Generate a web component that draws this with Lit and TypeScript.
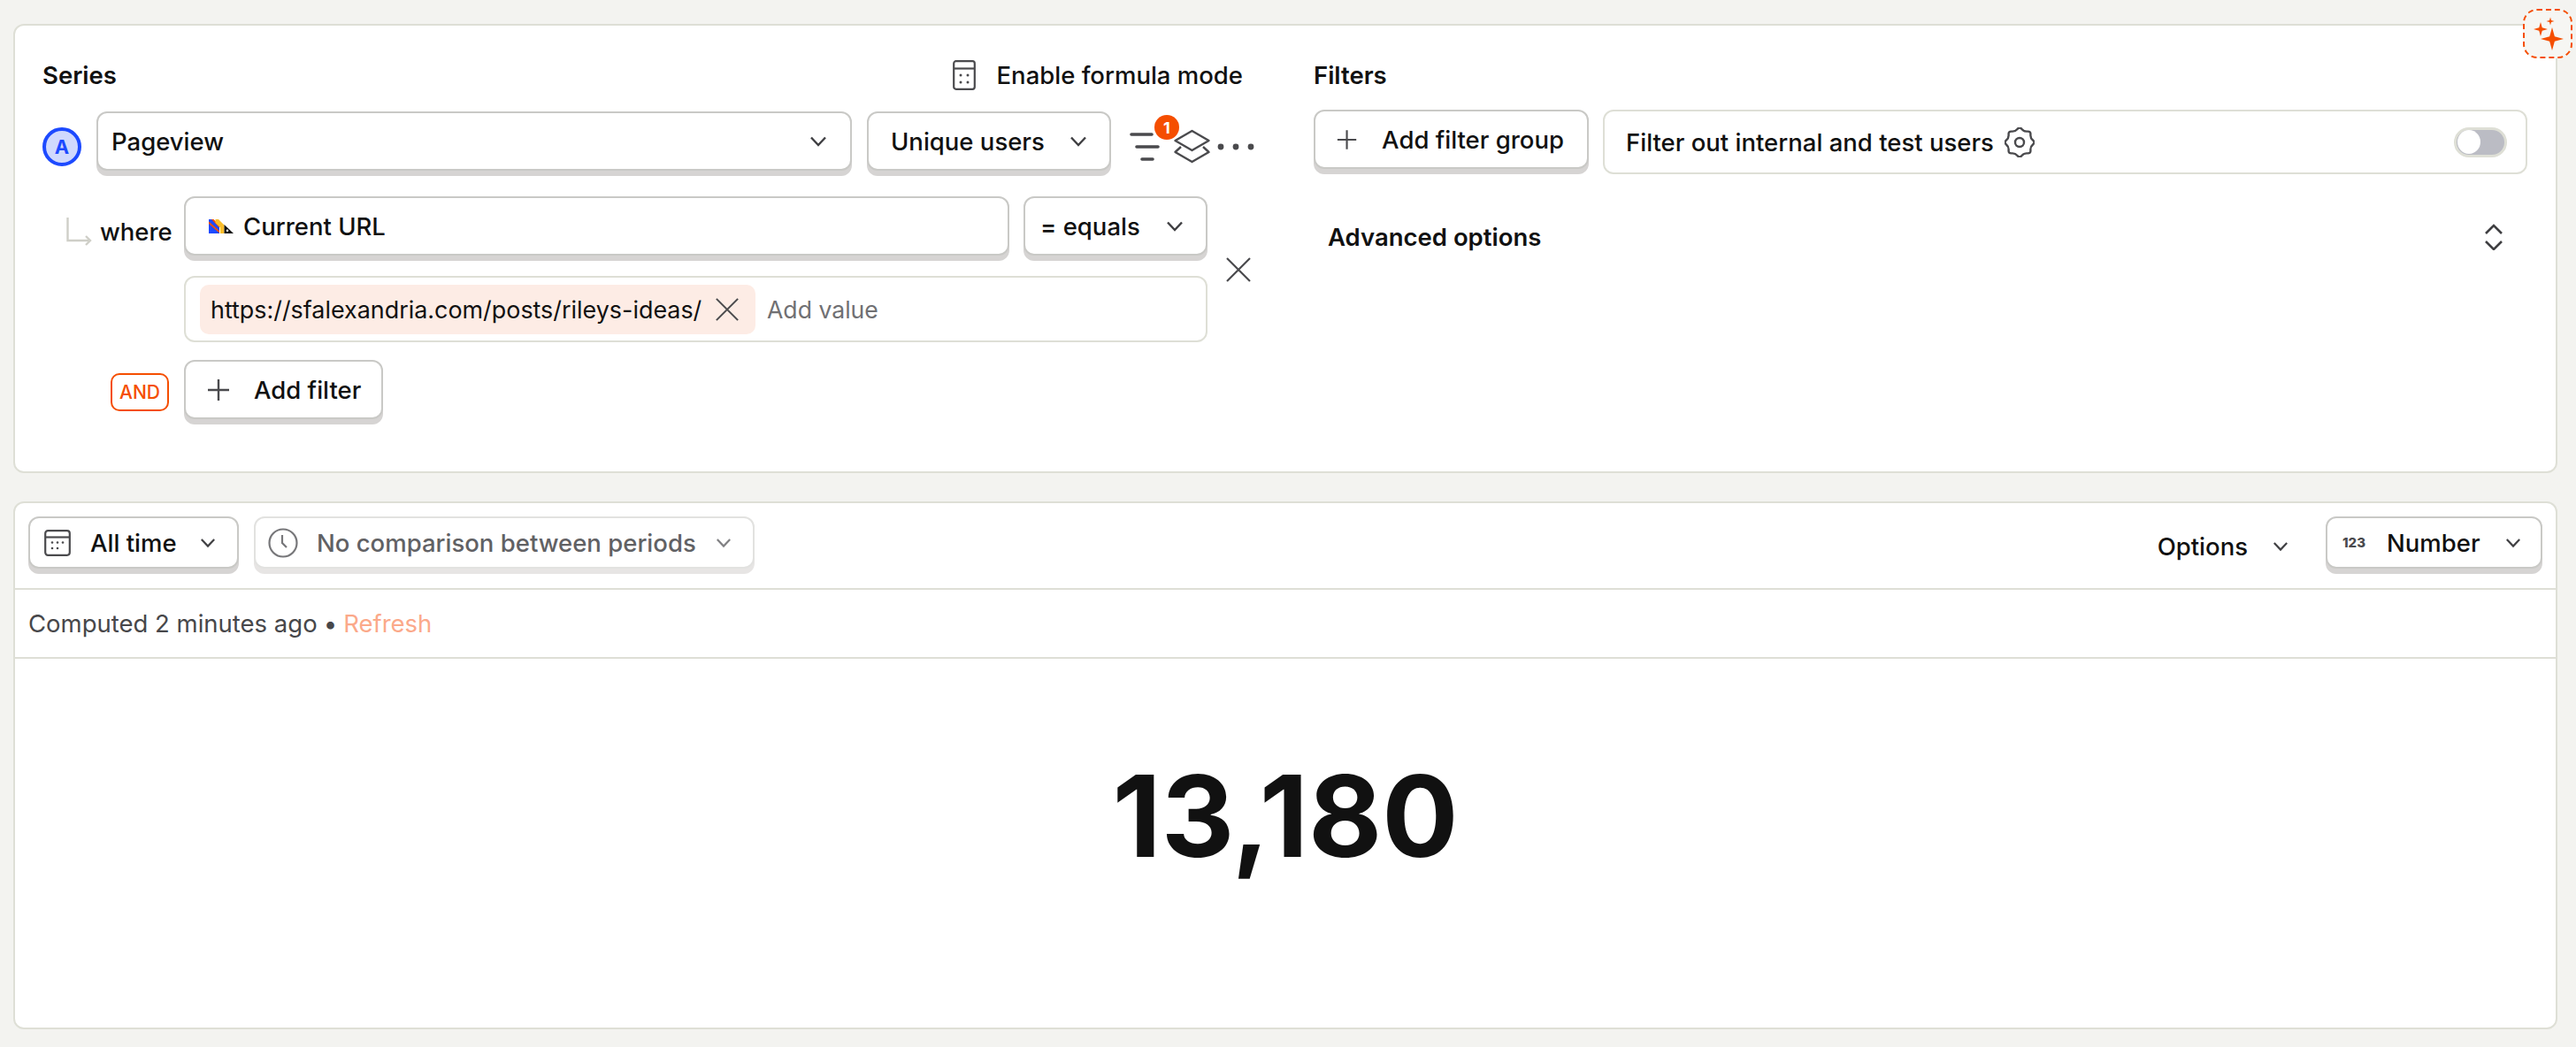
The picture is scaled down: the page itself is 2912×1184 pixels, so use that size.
import { LitElement, html, css, svg } from 'lit';
import { customElement } from 'lit/decorators.js';

const chevron = (w = 20) => html`<svg class="chev" width=${w} height=${w} viewBox="0 0 20 20" fill="none" stroke="#3f3f42" stroke-width="2.4"><path d="M2 5.5l8 8.5 8-8.5" /></svg>`;
const plus = html`<svg width="26" height="26" viewBox="0 0 26 26" stroke="#4a4a4d" stroke-width="2.4"><path d="M13 1v24M1 13h24" /></svg>`;
const cross = (s: number) => html`<svg class="cross" width=${s} height=${s} viewBox="0 0 30 30" fill="none" stroke="#4a4a4d" stroke-width="2.2"><path d="M2 2l26 26M28 2L2 28" /></svg>`;
const star = (cx: number, cy: number, r: number) => {
    const k = r * 0.22;
    return svg`<path d="M${cx} ${cy - r}L${cx + k} ${cy - k}L${cx + r} ${cy}L${cx + k} ${cy + k}L${cx} ${cy + r}L${cx - k} ${cy + k}L${cx - r} ${cy}L${cx - k} ${cy - k}Z" />`;
};

// scalloped outline for the gear, 8 lobes
const gearPath = () => {
    const pts: number[][] = [];
    for (let i = 0; i < 16; i++) {
        const r = i % 2 ? 13 : 18;
        const a = (i * Math.PI) / 8 - Math.PI / 2;
        pts.push([17 + r * Math.cos(a), 17 + r * Math.sin(a)]);
    }
    const mid = (a: number[], b: number[]) => [(a[0] + b[0]) / 2, (a[1] + b[1]) / 2];
    const start = mid(pts[15], pts[0]);
    let d = `M${start[0].toFixed(1)} ${start[1].toFixed(1)}`;
    pts.forEach((p, i) => {
        const m = mid(p, pts[(i + 1) % 16]);
        d += `Q${p[0].toFixed(1)} ${p[1].toFixed(1)} ${m[0].toFixed(1)} ${m[1].toFixed(1)}`;
    });
    return d + 'Z';
};

@customElement('app-root')
export class AppRoot extends LitElement {
    static styles = css`
        :host {
            display: block;
            position: relative;
            width: 2912px;
            height: 1184px;
            background: #f3f3f0;
            font-family: Inter, 'Liberation Sans', sans-serif;
            font-size: 27.5px;
            font-weight: 500;
            color: #111;
            padding: 27px 21px 0 15px;
            box-sizing: border-box;
            overflow: hidden;
        }
        .card {
            background: #fff;
            border: 2px solid #dedfd6;
            border-radius: 12px;
            box-sizing: border-box;
        }
        .query {
            height: 508px;
            padding: 38px 32px 0 31px;
            display: grid;
            grid-template-columns: 1372px 1372px;
            column-gap: 65px;
        }
        .head {
            height: 36px;
            margin-bottom: 23px;
            display: flex;
            align-items: center;
            justify-content: space-between;
        }
        .label {
            font-weight: 600;
        }
        .formula {
            display: flex;
            align-items: center;
            gap: 24px;
            margin-right: 15px;
        }
        .btn {
            display: flex;
            align-items: center;
            box-sizing: border-box;
            height: 67px;
            margin-bottom: 6px;
            padding: 0 26px 0 15px;
            background: #fff;
            border: 2px solid #c9c9c6;
            border-radius: 12px;
            box-shadow: 0 6px 0 0 #d6d4d3;
            white-space: nowrap;
        }
        .btn .grow {
            flex: 1;
        }
        .row {
            display: flex;
            align-items: flex-start;
        }
        .badge {
            width: 44px;
            height: 44px;
            margin: 18px 17px 0 0;
            flex: none;
            border: 4px solid #1d4aff;
            border-radius: 50%;
            box-sizing: border-box;
            background: #d0d9fd;
            color: #1d4aff;
            font-size: 22px;
            font-weight: 700;
            display: flex;
            align-items: center;
            justify-content: center;
        }
        .event {
            width: 854px;
            margin-right: 17px;
        }
        .math {
            width: 276px;
            padding-left: 25px;
            padding-right: 25px;
        }
        .tools {
            display: flex;
            margin: 11px 0 0 21px;
            position: relative;
        }
        .count {
            position: absolute;
            left: 28px;
            top: -7px;
            width: 28px;
            height: 28px;
            border-radius: 50%;
            background: #f54e00;
            color: #fff;
            font-size: 18px;
            font-weight: 700;
            display: flex;
            align-items: center;
            justify-content: center;
        }
        .where {
            display: grid;
            grid-template-columns: 160px 933px 224px 50px;
            margin-top: 23px;
        }
        .where-label {
            grid-column: 1;
            grid-row: 1;
            display: flex;
            align-items: center;
            gap: 9px;
            margin: 22px 0 0 27px;
            height: 36px;
        }
        .prop {
            grid-column: 2;
            grid-row: 1;
            padding-left: 26px;
        }
        .prop span {
            margin-left: 11px;
        }
        .op {
            grid-column: 3;
            grid-row: 1;
            margin-left: 16px;
            padding-left: 17px;
            padding-right: 25px;
        }
        .remove {
            grid-column: 4;
            grid-row: 1 / span 2;
            align-self: center;
            margin-left: 20px;
            display: flex;
        }
        .values {
            grid-column: 2 / 4;
            grid-row: 2;
            margin-top: 17px;
            height: 75px;
            box-sizing: border-box;
            border: 2px solid #dedfd6;
            border-radius: 12px;
            padding: 8px 16px;
            display: flex;
            align-items: center;
            gap: 13px;
        }
        .chip {
            height: 56px;
            width: 628px;
            box-sizing: border-box;
            padding: 0 18px 0 12px;
            display: flex;
            align-items: center;
            justify-content: space-between;
            background: #fdece5;
            border-radius: 10px;
            white-space: nowrap;
            font-size: 26.9px;
            font-weight: 400;
        }
        .chip .cross {
            flex: none;
        }
        .placeholder {
            color: #707073;
            font-weight: 400;
            font-size: 26.6px;
        }
        .and-row {
            margin: 20px 0 0 77px;
        }
        .and {
            width: 66px;
            height: 43px;
            margin: 15px 17px 0 0;
            box-sizing: border-box;
            border: 2px solid #f54e00;
            border-radius: 10px;
            color: #f54e00;
            font-size: 21px;
            display: flex;
            align-items: center;
            justify-content: center;
        }
        .add {
            gap: 27px;
            padding-left: 24px;
            padding-right: 23px;
        }
        .filters {
            display: flex;
            gap: 16px;
            height: 73px;
            margin-top: -2px;
        }
        .group {
            width: 311px;
            gap: 28px;
            padding-left: 24px;
        }
        .internal {
            flex: 1;
            height: 73px;
            box-sizing: border-box;
            border: 2px solid #dedfd6;
            border-radius: 12px;
            padding: 0 21px 0 24px;
            display: flex;
            align-items: center;
            gap: 12px;
        }
        .toggle {
            margin-left: auto;
            width: 60px;
            height: 34px;
            box-sizing: border-box;
            border: 3px solid #dedfd6;
            border-radius: 17px;
            background: #bbbcc4;
            display: flex;
            align-items: center;
            padding-left: 1px;
        }
        .toggle i {
            display: block;
            width: 26px;
            height: 27px;
            border-radius: 50%;
            background: #fff;
        }
        .advanced {
            display: flex;
            align-items: center;
            justify-content: space-between;
            margin-top: 54px;
            padding: 0 28px 0 16px;
            height: 34px;
            font-weight: 600;
        }
        .result {
            margin-top: 32px;
            height: 597px;
            display: flex;
            flex-direction: column;
        }
        .toolbar {
            height: 98px;
            flex: none;
            box-sizing: border-box;
            padding: 15px 15px 0 15px;
            display: flex;
            align-items: flex-start;
            gap: 17px;
            border-bottom: 2px solid #dedfd6;
        }
        .toolbar .btn {
            height: 59px;
        }
        .alltime {
            width: 238px;
            padding-left: 16px;
            padding-right: 24px;
            gap: 22px;
        }
        .compare {
            width: 566px;
            padding-left: 14px;
            padding-right: 24px;
            gap: 21px;
            color: #616164;
            border-color: #e2e2e0;
            box-shadow: 0 6px 0 0 #e7e5e4;
        }
        .compare .chev {
            stroke: #808083;
        }
        .options {
            margin-left: auto;
            display: flex;
            align-items: center;
            gap: 28px;
            height: 68px;
            margin-right: 25px;
        }
        .number {
            width: 245px;
            padding-left: 17px;
            padding-right: 22px;
            gap: 22px;
        }
        .digits {
            font-size: 15px;
            font-weight: 800;
            color: #4a4a4d;
            width: 28px;
        }
        .computed {
            height: 78px;
            flex: none;
            box-sizing: border-box;
            padding: 0 15px;
            display: flex;
            align-items: center;
            gap: 7px;
            border-bottom: 2px solid #dedfd6;
            color: #47474a;
            font-weight: 400;
        }
        .refresh {
            color: #fba98a;
        }
        .big {
            flex: 1;
            display: flex;
            justify-content: center;
            padding-top: 84px;
            font-size: 128px;
            font-weight: 700;
            line-height: 188px;
            color: #111;
        }
        .sparkle {
            position: absolute;
            left: 2852px;
            top: 10px;
            width: 56px;
            height: 56px;
            box-sizing: border-box;
            background: #f6f6f3;
            border: 2px dashed #f54e00;
            border-radius: 16px;
        }
    `;

    render() {
        return html`
            <div class="card query">
                <div>
                    <div class="head">
                        <span class="label">Series</span>
                        <span class="formula">
                            <svg width="26" height="34" viewBox="0 0 26 34" fill="none" stroke="#4a4a4d" stroke-width="2.2">
                                <rect x="1.2" y="1.2" width="23.6" height="31.6" rx="2.5" />
                                <path d="M1 9.5h24" />
                                <g fill="#4a4a4d" stroke="none">
                                    <circle cx="9" cy="17" r="1.5" /><circle cx="17" cy="17" r="1.5" />
                                    <circle cx="9" cy="25" r="1.5" /><circle cx="17" cy="25" r="1.5" />
                                </g>
                            </svg>
                            Enable formula mode
                        </span>
                    </div>
                    <div class="row">
                        <span class="badge">A</span>
                        <div class="btn event"><span class="grow">Pageview</span>${chevron()}</div>
                        <div class="btn math"><span class="grow">Unique users</span>${chevron()}</div>
                        <div class="tools">
                            <svg width="143" height="48" viewBox="0 0 143 48" fill="none" stroke="#4a4a4d" stroke-width="3.6" stroke-linecap="round">
                                <path d="M2 15H25M8 29H32M14 43H26" />
                                <g stroke-width="2.4" stroke-linecap="butt" stroke-linejoin="round">
                                    <path d="M70.5 11L89.5 22L70.5 33L51.5 22Z" />
                                    <path d="M58 29L51.5 35L70.5 46L89.5 35L83 29" />
                                </g>
                                <g fill="#4a4a4d" stroke="none">
                                    <circle cx="103" cy="29" r="3.4" /><circle cx="120" cy="29" r="3.4" /><circle cx="137" cy="29" r="3.4" />
                                </g>
                            </svg>
                            <span class="count">1</span>
                        </div>
                    </div>
                    <div class="where">
                        <div class="where-label">
                            <svg width="29" height="32" viewBox="0 0 29 32" fill="none" stroke="#cfcfc8" stroke-width="2.4">
                                <path d="M1.5 0v26h24" /><path d="M22 21l5 5-5 5" />
                            </svg>
                            <span>where</span>
                        </div>
                        <div class="btn prop">
                            <svg width="28" height="16" viewBox="0 0 28 16">
                                <path d="M0 0H4L12 8V16H0Z" fill="#1d4aff" />
                                <path d="M3 0H5.500L12 6.500V9.500ZM0 2.500L12 13V15.500L0 5Z" fill="#f54e00" />
                                <path d="M7.500 0H11L17.500 6.500V16H13V9.500L7.500 4Z" fill="#f9bd2b" />
                                <path d="M17.500 6L28 16H17.500Z" fill="#111" />
                                <circle cx="21" cy="12.800" r="1.300" fill="#fff" />
                            </svg>
                            <span>Current URL</span>
                        </div>
                        <div class="btn op"><span class="grow">= equals</span>${chevron()}</div>
                        <div class="remove">${cross(30)}</div>
                        <div class="values">
                            <span class="chip">https://sfalexandria.com/posts/rileys-ideas/ ${cross(28)}</span>
                            <span class="placeholder">Add value</span>
                        </div>
                    </div>
                    <div class="row and-row">
                        <span class="and">AND</span>
                        <div class="btn add">${plus}<span>Add filter</span></div>
                    </div>
                </div>
                <div>
                    <div class="head"><span class="label">Filters</span></div>
                    <div class="filters">
                        <div class="btn group">${plus}<span>Add filter group</span></div>
                        <div class="internal">
                            <span>Filter out internal and test users</span>
                            <svg width="34" height="34" viewBox="0 0 34 34" fill="none" stroke="#4a4a4d" stroke-width="2.4">
                                <path d=${gearPath()} />
                                <circle cx="17" cy="17" r="5" />
                            </svg>
                            <span class="toggle"><i></i></span>
                        </div>
                    </div>
                    <div class="advanced">
                        <span>Advanced options</span>
                        <svg width="20" height="30" viewBox="0 0 20 30" fill="none" stroke="#3f3f42" stroke-width="2.6">
                            <path d="M1 11l9-9 9 9M1 20l9 9 9-9" />
                        </svg>
                    </div>
                </div>
            </div>
            <div class="card result">
                <div class="toolbar">
                    <div class="btn alltime">
                        <svg width="30" height="30" viewBox="0 0 30 30" fill="none" stroke="#4a4a4d" stroke-width="2.2">
                            <rect x="1.2" y="1.2" width="27.6" height="27.6" rx="3" />
                            <path d="M1 8.5h28" />
                            <g fill="#4a4a4d" stroke="none">
                                <circle cx="9" cy="14.5" r="1.3" /><circle cx="15" cy="14.5" r="1.3" /><circle cx="21" cy="14.5" r="1.3" />
                                <circle cx="9" cy="21" r="1.3" /><circle cx="15" cy="21" r="1.3" />
                            </g>
                        </svg>
                        <span class="grow">All time</span>${chevron(18)}
                    </div>
                    <div class="btn compare">
                        <svg width="34" height="34" viewBox="0 0 34 34" fill="none" stroke="#77777a" stroke-width="2.2">
                            <circle cx="17" cy="17" r="15.5" /><path d="M16 8v9l5 5" />
                        </svg>
                        <span class="grow">No comparison between periods</span>${chevron(18)}
                    </div>
                    <div class="options"><span>Options</span>${chevron(18)}</div>
                    <div class="btn number">
                        <span class="digits">123</span>
                        <span class="grow">Number</span>${chevron(18)}
                    </div>
                </div>
                <div class="computed">
                    <span>Computed 2 minutes ago</span><span>•</span><span class="refresh">Refresh</span>
                </div>
                <div class="big">13,180</div>
            </div>
            <div class="sparkle">
                <svg width="52" height="52" viewBox="0 0 52 52" fill="#f54e00">
                    ${star(31, 32, 13)}${star(18, 21, 8)}${star(29, 12, 4.5)}
                </svg>
            </div>
        `;
    }
}
